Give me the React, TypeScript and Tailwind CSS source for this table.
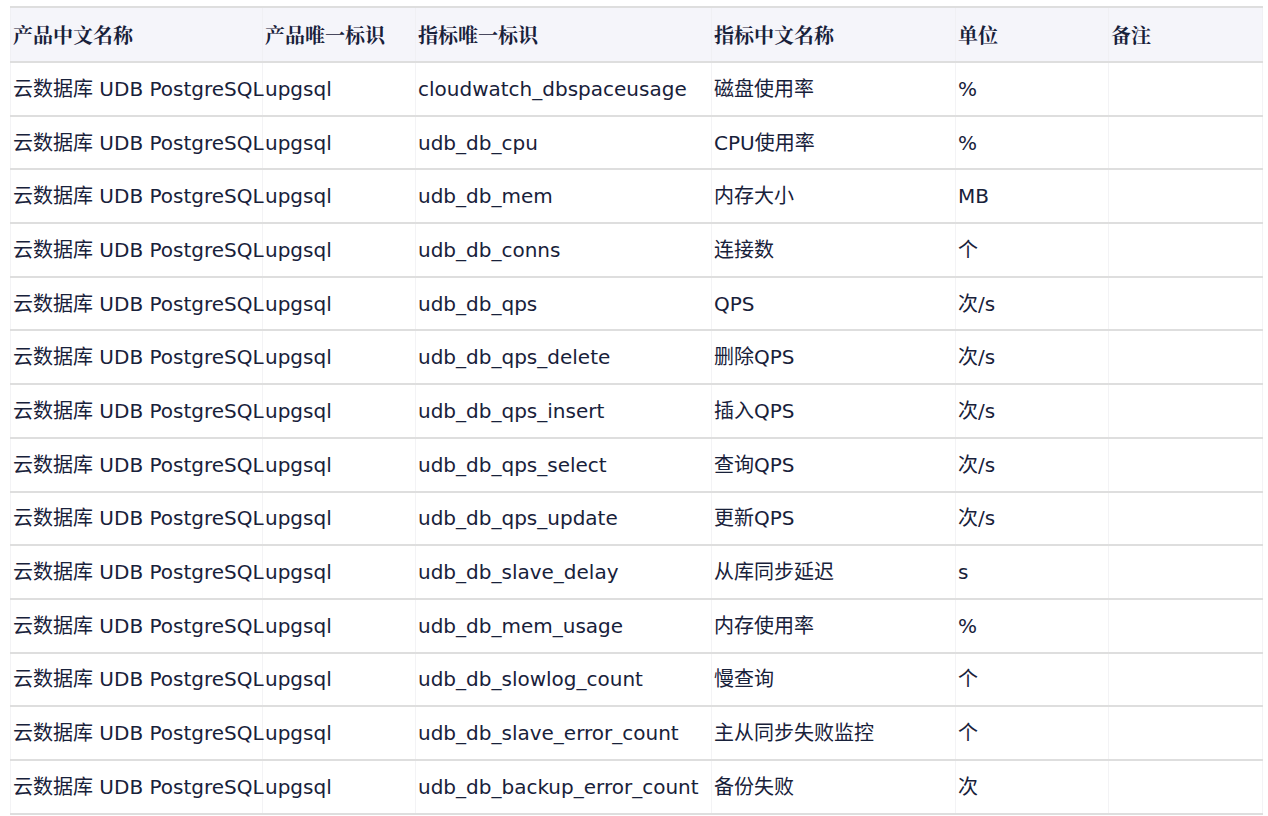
const rows: [string, string, string, string][] = [
  ["cloudwatch_dbspaceusage", "磁盘使用率", "%", ""],
  ["udb_db_cpu", "CPU使用率", "%", ""],
  ["udb_db_mem", "内存大小", "MB", ""],
  ["udb_db_conns", "连接数", "个", ""],
  ["udb_db_qps", "QPS", "次/s", ""],
  ["udb_db_qps_delete", "删除QPS", "次/s", ""],
  ["udb_db_qps_insert", "插入QPS", "次/s", ""],
  ["udb_db_qps_select", "查询QPS", "次/s", ""],
  ["udb_db_qps_update", "更新QPS", "次/s", ""],
  ["udb_db_slave_delay", "从库同步延迟", "s", ""],
  ["udb_db_mem_usage", "内存使用率", "%", ""],
  ["udb_db_slowlog_count", "慢查询", "个", ""],
  ["udb_db_slave_error_count", "主从同步失败监控", "个", ""],
  ["udb_db_backup_error_count", "备份失败", "次", ""],
];

const headers = ["产品中文名称", "产品唯一标识", "指标唯一标识", "指标中文名称", "单位", "备注"];
const widths = ["w-[252px]", "w-[153px]", "w-[296px]", "w-[244px]", "w-[153px]", "w-[154px]"];

export default function App() {
  return (
    <div className="bg-white w-[1268px] h-[816px] pt-[6px] pl-[10px]">
      <table
        className="table-fixed border-collapse w-[1252px] text-[#18213a] text-[20px]"
        style={{ fontFamily: '"DejaVu Sans", "Noto Sans CJK SC", sans-serif' }}
      >
        <colgroup>
          {widths.map((w, i) => (
            <col key={i} className={w} />
          ))}
        </colgroup>
        <thead>
          <tr className="bg-[#f5f5fa] h-[55px] border-t-2 border-b-2 border-[#dedede]">
            {headers.map((h) => (
              <th
                key={h}
                className="text-left font-bold px-[2px] border-x border-[#f0f0f4] whitespace-nowrap"
                style={{ fontFamily: '"Noto Serif CJK SC", "Noto Sans CJK SC", serif' }}
              >
                {h}
              </th>
            ))}
          </tr>
        </thead>
        <tbody>
          {rows.map((r, i) => (
            <tr key={i} className="h-[53.7px] border-b-2 border-[#dedede]">
              <td className="px-[2px] border-x border-[#f3f3f5] whitespace-nowrap overflow-visible">云数据库 UDB PostgreSQL</td>
              <td className="px-[2px] border-x border-[#f3f3f5] whitespace-nowrap">upgsql</td>
              <td className="px-[2px] border-x border-[#f3f3f5] whitespace-nowrap">{r[0]}</td>
              <td className="px-[2px] border-x border-[#f3f3f5] whitespace-nowrap">{r[1]}</td>
              <td className="px-[2px] border-x border-[#f3f3f5] whitespace-nowrap">{r[2]}</td>
              <td className="px-[2px] border-x border-[#f3f3f5] whitespace-nowrap">{r[3]}</td>
            </tr>
          ))}
        </tbody>
      </table>
    </div>
  );
}
